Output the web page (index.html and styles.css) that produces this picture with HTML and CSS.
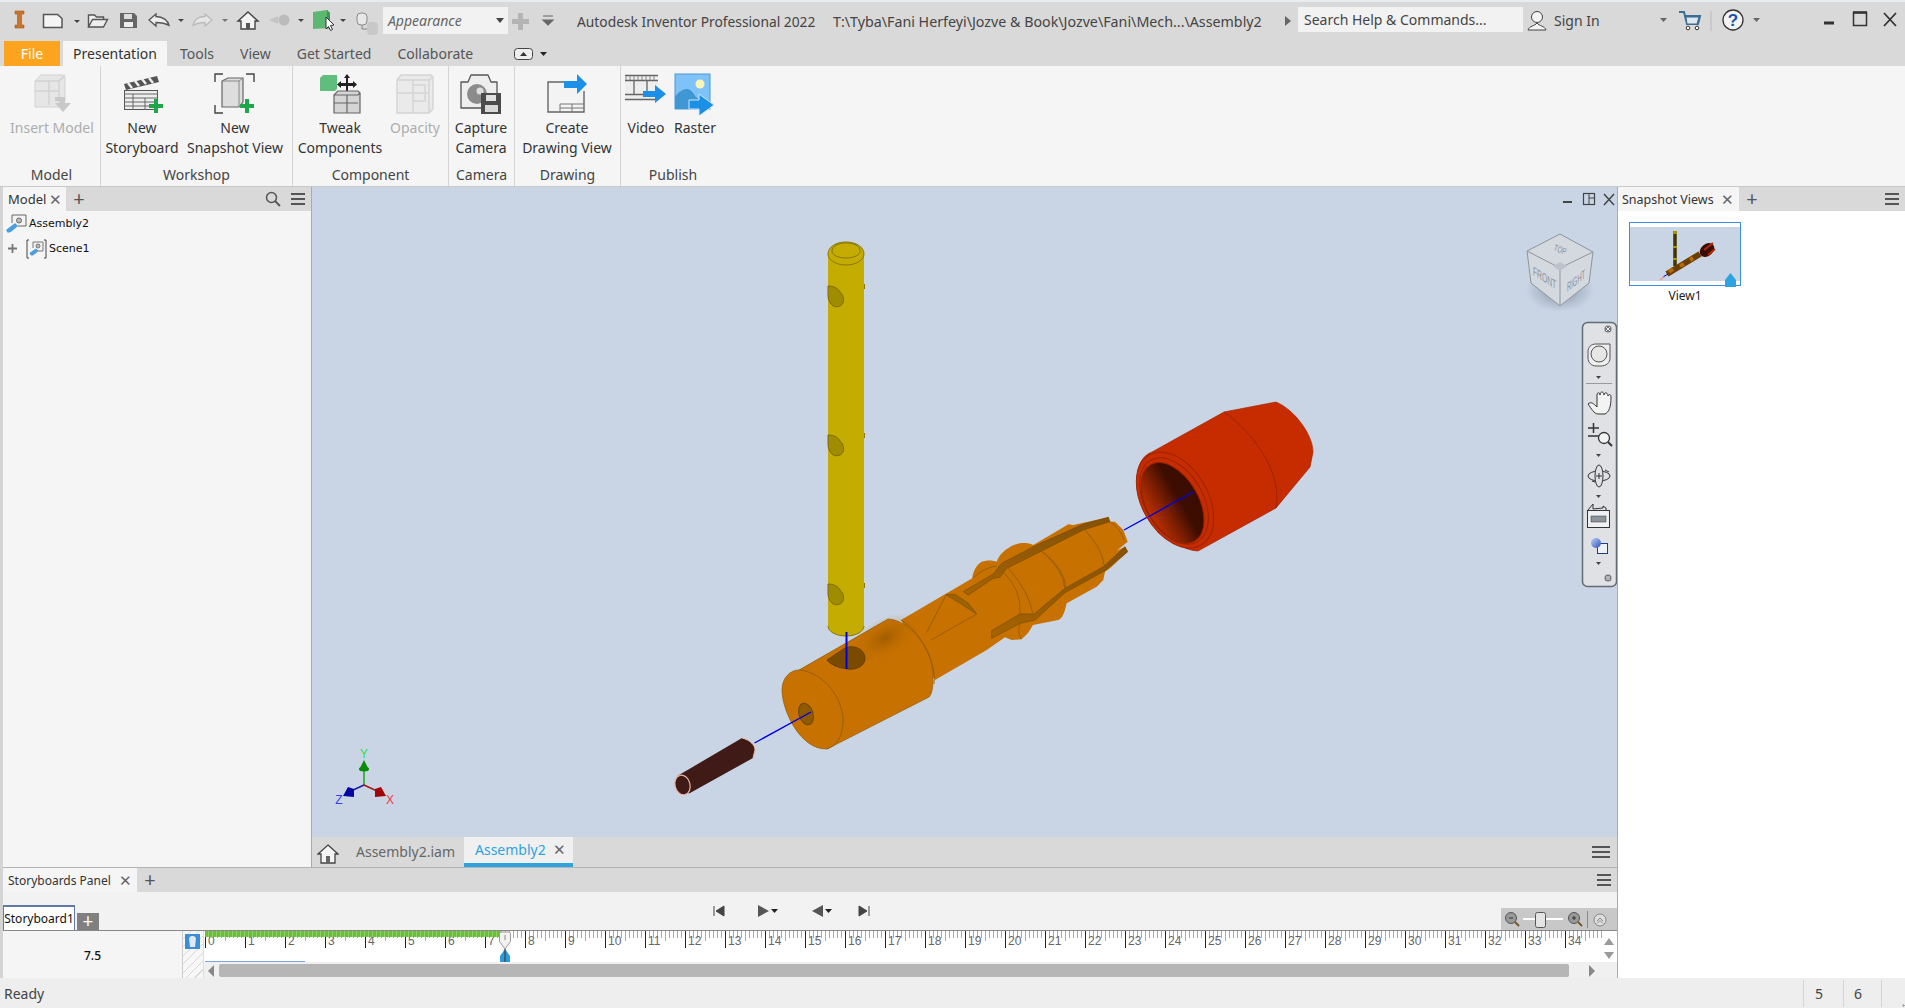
FILE: index.html
```html
<!DOCTYPE html>
<html lang="en">
<head>
<meta charset="utf-8">
<title>Autodesk Inventor Professional 2022</title>
<link rel="stylesheet" href="styles.css">
</head>
<body>
<div class="app">
  <div class="topstrip"></div>
  <header class="titlebar">
    <svg class="qat" viewBox="0 2 383 39" width="383" height="39">
      <path d="M15 11h9v3h-2.500v11h2.500v3h-9v-3h2.500v-11h-2.500z" fill="#c9762a" stroke="#a85a18" stroke-width=".6"/>
      <path d="M43.500 14.500h14l4.500 4v9h-18.500z" fill="#f4f4f4" stroke="#555" stroke-width="1.500"/>
      <path d="M74 20h6l-3 3z" fill="#444"/>
      <path d="M88.500 27v-12h6l2 2h7v3M88.500 27l4-7.500h15l-4 7.500z" fill="#eee" stroke="#555" stroke-width="1.400"/>
      <path d="M120 13h14l3 3v12h-17z" fill="#666"/>
      <rect x="124" y="14" width="8" height="5" fill="#ddd"/><rect x="124" y="22" width="9" height="5" fill="#eee"/>
      <path d="M156 14l-7 6 7 6v-3.500c5 0 9 .5 13 3-1-5-6-9-13-9z" fill="#eee" stroke="#555" stroke-width="1.300"/>
      <path d="M178 19h6l-3 3z" fill="#444"/>
      <path d="M205 14l7 6-7 6v-3.500c-5 0-8 .5-12 3 1-5 5-9 12-9z" fill="#e6e6e6" stroke="#bbb" stroke-width="1.300"/>
      <path d="M222 19h6l-3 3z" fill="#777"/>
      <path d="M248 12l10 9h-3v8h-14v-8h-3z" fill="#f3f3f3" stroke="#444" stroke-width="1.400"/><rect x="246" y="23" width="4" height="6" fill="#555"/>
      <circle cx="284" cy="20" r="5.500" fill="#bbb"/><path d="M269 20l9-4v8z" fill="#c4c4c4"/>
      <path d="M298 19h6l-3 3z" fill="#444"/>
      <path d="M313 12l14-2 3 3v15l-17 1z" fill="#5cb870"/><path d="M327 10l3 3v15l-3 1z" fill="#3c9854"/>
      <path d="M326 17l8 8-3.500.5 2 4-2 1-2-4-2.500 2.500z" fill="#fff" stroke="#333"/>
      <path d="M340 19h6l-3 3z" fill="#444"/>
      <rect x="357" y="13" width="10" height="12" rx="4" fill="#e8e8e8" stroke="#8a8a8a"/>
      <rect x="367" y="22" width="11" height="13" rx="4" fill="#c8c8c8"/>
      <path d="M362 25v4h5" fill="none" stroke="#888"/>
    </svg>
    <div class="appearance"><span>Appearance</span><i class="caret dark"></i></div>
    <svg class="qat2" viewBox="0 0 62 39" width="62" height="39">
      <path d="M10 11h5v6h6v5h-6v6h-5v-6h-6v-5h6z" fill="#b4b4b4"/>
      <path d="M35 14h10M35 18h10l-5 5z" fill="#666" stroke="#666" stroke-width="1.200"/>
    </svg>
    <div class="apptitle">Autodesk Inventor Professional 2022</div>
    <div class="filepath">T:\Tyba\Fani Herfeyi\Jozve &amp; Book\Jozve\Fani\Mech...\Assembly2</div>
    <i class="caret right"></i>
    <div class="search">Search Help &amp; Commands...</div>
    <svg class="winctl" viewBox="1523 2 382 39" width="382" height="39">
      <circle cx="1537" cy="17" r="5.500" fill="#f4f4f4" stroke="#444"/>
      <path d="M1537 23c-2 3-8 3-9 7h18c-1-4-7-4-9-7z" fill="#f4f4f4" stroke="#444"/>
      <text x="1554" y="26" class="signin">Sign In</text>
      <path d="M1660 18h7l-3.500 4z" fill="#666"/>
      <path d="M1679 12h5l3 12h11l2-8h-15" fill="none" stroke="#3a6d92" stroke-width="2"/>
      <path d="M1686 17h13l-2 7h-10z" fill="#dfe7ee" stroke="#3a6d92"/>
      <circle cx="1688" cy="28" r="1.800" fill="#fff" stroke="#333"/><circle cx="1697" cy="28" r="1.800" fill="#fff" stroke="#333"/>
      <path d="M1711 11v20" stroke="#bbb"/>
      <circle cx="1733" cy="20" r="10" fill="#f3f3f3" stroke="#333" stroke-width="1.300"/>
      <text x="1733" y="26" class="helpq">?</text>
      <path d="M1753 18h7l-3.500 4z" fill="#666"/>
      <rect x="1824" y="21.500" width="10" height="3" fill="#333"/>
      <rect x="1853.500" y="12.500" width="13" height="13" fill="none" stroke="#333" stroke-width="1.500"/><path d="M1853 12.500h14" stroke="#333" stroke-width="2.500"/>
      <path d="M1884 13l12 13M1896 13l-12 13" stroke="#333" stroke-width="1.800"/>
    </svg>
  </header>
  <nav class="tabs">
    <div class="tab file">File</div>
    <div class="tab active">Presentation</div>
    <div class="tab">Tools</div>
    <div class="tab">View</div>
    <div class="tab">Get Started</div>
    <div class="tab">Collaborate</div>
    <svg class="tabmin" viewBox="0 0 34 14" width="34" height="14"><rect x=".5" y="1.500" width="18" height="11" rx="3" fill="#eee" stroke="#444"/><path d="M6 9l3.500-4 3.500 4z" fill="#333"/><path d="M26 5h7l-3.500 4z" fill="#222"/></svg>
  </nav>
  <section class="ribbon">
    <div class="group g-model">
      <div class="btns">
        <div class="btn b-insert disabled">
          <svg viewBox="0 0 42 42" width="42" height="42"><path d="M4 8l6-6h22l2 2v24l-6 6H4z" fill="#e6e6e6" stroke="#d2d2d2"/><path d="M4 18h24M18 8v24M28 8v24M4 8h24l6-6" fill="none" stroke="#d2d2d2" stroke-width="1.500"/><path d="M24 24h10v6h6l-8 9-8-9h5v-2h-5z" fill="#c9c9c9"/></svg>
          <span>Insert Model</span>
        </div>
      </div>
      <div class="glabel">Model</div>
    </div>
    <div class="group g-workshop">
      <div class="btns">
        <div class="btn b-story">
          <svg viewBox="0 0 42 42" width="42" height="42"><path d="M3 11L36 3l2 6-33 8z" fill="#555"/><path d="M7 10l4 5M14 8l4 5M21 6l4 5M28 5l4 5" stroke="#eee" stroke-width="2.500"/><rect x="3.500" y="17.500" width="33" height="19" fill="#eee" stroke="#555"/><path d="M3 21h34M3 25h34M3 29h34M3 33h30M12 21v16M24 25v12" stroke="#666"/><path d="M28 31h5v-5h4v5h5v4h-5v5h-4v-5h-5z" fill="#1fa54a"/></svg>
          <span>New<br>Storyboard</span>
        </div>
        <div class="btn b-snap">
          <svg viewBox="0 0 42 42" width="42" height="42"><path d="M1 9V1h8M32 1h8v8M1 32v8h8" fill="none" stroke="#444" stroke-width="1.400"/><path d="M8 8l6-3h15v24l-4 5H8z" fill="#ddd" stroke="#666" stroke-width="1.200"/><path d="M8 8h17v26M25 8l4-3" fill="none" stroke="#888"/><path d="M26 31h5v-5h4v5h5v4h-5v5h-4v-5h-5z" fill="#1fa54a"/></svg>
          <span>New<br>Snapshot View</span>
        </div>
      </div>
      <div class="glabel">Workshop</div>
    </div>
    <div class="group g-component">
      <div class="btns">
        <div class="btn b-tweak">
          <svg viewBox="0 0 42 42" width="42" height="42"><path d="M1 5l3-3h14v14l-2 2H1z" fill="#5fbd7e"/><path d="M28 1l3 4h-2v5h5V8l4 3.500-4 3.500v-2h-5v5h2l-3 4-3-4h2v-5h-5v2l-4-3.500 4-3.500v2h5V5h-2z" fill="#222"/><path d="M15 22l4-4h20l2 2v20H15z" fill="#d5d5d5" stroke="#666" stroke-width="1.200"/><path d="M15 30h24M28 22v18M15 22h24l2-2" fill="none" stroke="#666" stroke-width="1.200"/></svg>
          <span>Tweak<br>Components</span>
        </div>
        <div class="btn b-opacity disabled">
          <svg viewBox="0 0 42 42" width="42" height="42"><path d="M3 7l4-5h30l2 2v32l-4 4H3z" fill="#eaeaea" stroke="#d4d4d4" stroke-width="1.400"/><path d="M3 20h32M19 7v33M35 7v33M3 7h32l4-4M19 12h12v16H19" fill="none" stroke="#d4d4d4" stroke-width="1.400"/></svg>
          <span>Opacity</span>
        </div>
      </div>
      <div class="glabel">Component</div>
    </div>
    <div class="group g-camera">
      <div class="btns">
        <div class="btn b-camera">
          <svg viewBox="0 0 42 42" width="42" height="42"><path d="M1 9h7l3-7h17l3 7h6v26H1z" fill="#eee" stroke="#555" stroke-width="1.300" stroke-linejoin="round"/><circle cx="17" cy="21" r="10" fill="#8b8b8b"/><circle cx="20" cy="18" r="3.500" fill="#ddd"/><path d="M21 20h20v21H21z" fill="#4b4b4b"/><rect x="26" y="22" width="10" height="6" fill="#e0e0e0"/><rect x="25" y="32" width="13" height="7" fill="#d8d8d8"/></svg>
          <span>Capture<br>Camera</span>
        </div>
      </div>
      <div class="glabel">Camera</div>
    </div>
    <div class="group g-drawing">
      <div class="btns">
        <div class="btn b-drawing">
          <svg viewBox="0 0 42 42" width="42" height="42"><path d="M22 9H2v30h36V18" fill="#f3f3f3" stroke="#666" stroke-width="1.400"/><path d="M14 31h24M14 31v8M26 31v8M14 35h24" fill="none" stroke="#777"/><path d="M18 8h13V1l10 10-10 10v-6H18z" fill="#1c8fe6"/></svg>
          <span>Create<br>Drawing View</span>
        </div>
      </div>
      <div class="glabel">Drawing</div>
    </div>
    <div class="group g-publish">
      <div class="btns">
        <div class="btn b-video">
          <svg viewBox="0 0 42 32" width="42" height="32"><path d="M0 2h33v24H0z" fill="#eee"/><path d="M0 2.500h33M0 7.500h33M0 21.500h33M0 26.500h33M9 8v13M22 8v13" stroke="#666" stroke-width="1.300"/><path d="M1 3v4M5 3v4M9 3v4M13 3v4M17 3v4M21 3v4M25 3v4M29 3v4" stroke="#888"/><path d="M18 18h12v-6l11 9-11 9v-6H18z" fill="#1c8fe6"/></svg>
          <span>Video</span>
        </div>
        <div class="btn b-raster">
          <svg viewBox="0 0 42 42" width="42" height="42"><rect x="1" y="1" width="35" height="35" fill="#7fc2f8" stroke="#4a9ad8"/><circle cx="26" cy="11" r="4.500" fill="#f9f5b8"/><path d="M1 36V24c3-5 8-8 12-8s6 4 9 8l6 4v8z" fill="#3f97d4"/><path d="M15 27h10v-6l15 11-15 11v-7H15z" fill="#1c8fe6" stroke="#cde6fa"/></svg>
          <span>Raster</span>
        </div>
      </div>
      <div class="glabel">Publish</div>
    </div>
  </section>
  <div class="workspace">
    <div class="leftcol">
      <div class="mainrow">
        <aside class="modelpanel">
          <div class="phead">
            <div class="ptab ptab-model">Model<span class="x">✕</span></div>
            <span class="plus">+</span>
            <span class="spacer"></span>
            <svg class="searchico" viewBox="0 0 16 16" width="16" height="16"><circle cx="6.500" cy="6.500" r="5" fill="none" stroke="#555" stroke-width="1.500"/><path d="M10 10l5 5" stroke="#555" stroke-width="1.800"/></svg>
            <span class="ham"><i></i><i></i><i></i></span>
          </div>
          <div class="tree">
            <div class="node n-root">
              <svg viewBox="0 0 21 20" width="21" height="20"><path d="M6 9V1h14v11h-8" fill="#f3f3f3" stroke="#666"/><circle cx="13" cy="6.500" r="2.500" fill="#bbb" stroke="#666"/><path d="M2 18l-1-2 8-6 2 2-6 5z" fill="#4a9fe0" stroke="#4a9fe0" stroke-linejoin="round" stroke-width="1.500"/></svg>
              <span>Assembly2</span>
            </div>
            <div class="node n-child">
              <svg class="expand" viewBox="0 0 9 9" width="9" height="9"><path d="M4.500 0v9M0 4.500h9" stroke="#777" stroke-width="1.800"/></svg>
              <svg class="sceneico" viewBox="0 0 21 20" width="21" height="20"><path d="M3 1H1v18h2M18 1h2v18h-2" fill="none" stroke="#444"/><path d="M7 9V3h10v9h-7" fill="#f3f3f3" stroke="#777"/><circle cx="12" cy="7" r="2" fill="#bbb" stroke="#777"/><path d="M5 16l-1-2 6-4 2 2-5 4z" fill="#4a9fe0" stroke="#4a9fe0" stroke-linejoin="round"/></svg>
              <span>Scene1</span>
            </div>
          </div>
        </aside>
        <div class="viewcol">
          <main class="viewport">
            <svg class="scene" viewBox="312 187 1305 650" width="1305" height="650">
              <defs>
                <linearGradient id="holeRed" x1="0" y1="1" x2="0" y2="0"><stop offset="0" stop-color="#bb3000"/><stop offset=".35" stop-color="#7a1e00"/><stop offset=".65" stop-color="#3d0d00"/><stop offset="1" stop-color="#3a0c00"/></linearGradient>
                <radialGradient id="shade" cx=".5" cy=".5" r=".5"><stop offset="0" stop-color="#7a4a00" stop-opacity=".5"/><stop offset="1" stop-color="#c67100" stop-opacity="0"/></radialGradient>
                <radialGradient id="cubeShadow" cx=".5" cy=".5" r=".5"><stop offset="0" stop-color="#6d7a8c" stop-opacity=".7"/><stop offset="1" stop-color="#6d7a8c" stop-opacity="0"/></radialGradient>
                <linearGradient id="ball" x1="0" y1="0" x2="1" y2="1"><stop offset="0" stop-color="#bcd0f4"/><stop offset="1" stop-color="#2b50c4"/></linearGradient>
                <linearGradient id="slot" x1="0" y1="0" x2="0" y2="1"><stop offset="0" stop-color="#84500a"/><stop offset="1" stop-color="#a66400"/></linearGradient>
              </defs>
              <g class="vpctl">
                <rect x="1563" y="201" width="9" height="2" fill="#444"/>
                <rect x="1583.500" y="193.500" width="11" height="11" fill="none" stroke="#444" stroke-width="1.200"/><path d="M1589 194v10M1589 198h5" stroke="#444"/>
                <path d="M1604 194l10 11M1614 194l-10 11" stroke="#444" stroke-width="1.500"/>
              </g>
              <!-- yellow pin -->
              <path d="M828 254c0-7 8-12 18-12s18 5 18 12v372c0 5-7 10-18 10s-18-5-18-10z" fill="#c4ac00"/>
              <path d="M828 254c0-7 8-12 18-12s18 5 18 12c0 6-8 11-18 11s-18-5-18-11zM832 251c0-5 6-8 14-8s14 3 14 8c0 4-6 7-14 7s-14-3-14-7z" fill="none" stroke="#8a7600" stroke-width="1"/>
              <path d="M828 626c0 5 7 10 18 10s18-5 18-10" fill="none" stroke="#8a7600"/>
              <path d="M828 286c5 0 10 2 12 6 4 4 4 8 3 11-2 4-8 5-11 2-3-3-4-6-4-10z" fill="#a08c00" stroke="#7d6a00"/>
              <path d="M828 435c5 0 10 2 12 6 4 4 4 8 3 11-2 4-8 5-11 2-3-3-4-6-4-10z" fill="#a08c00" stroke="#7d6a00"/>
              <path d="M828 584c5 0 10 2 12 6 4 4 4 8 3 11-2 4-8 5-11 2-3-3-4-6-4-10z" fill="#a08c00" stroke="#7d6a00"/>
              <path d="M864.500 284v5M864.500 433v5M864.500 583v5" stroke="#8a7600"/>
              <!-- orange body: shaft + collet -->
              <path d="M901 620L972.300 578.300C972.500 572 978 561 985 561C990 560 994 561 996.700 561.700C999 556 1003 551 1008.300 548.300C1014 544 1024 541 1033.300 545L1061.700 528.300L1068.300 524.300L1073.300 525L1108.300 517.300L1110 521.700L1115 521.700L1123.300 530L1127.700 541.700L1116.700 550.700L1125 546.700L1127.700 551.700L1110 568.300L1105 571.700L1103.300 580L1096.700 586.700L1066.700 603.300L1065 610C1063 616 1061 619 1058.300 620L1033 625L1028 633L1021.700 639.300L1011.700 640L1005 637.300L986.700 650L935 680z" fill="#c67100"/>
              <path d="M963.300 591.700L993.300 574L1001.700 563.300L1036.700 545L1083.300 524L1108.300 517.300L1110 521.700L1083.300 530L1040 551.700L1006.700 568.300L1000 577.300L993.300 578.300L968.300 595z" fill="url(#slot)" stroke="#7b4c00" stroke-width=".7"/>
              <path d="M991.700 630.700L1020 614L1034 614L1065 588.300L1103.300 566.700L1125 546.700L1127.700 551.700L1105 570.700L1065 592.700L1035 620L1020 623.300L991.700 638.300z" fill="url(#slot)" stroke="#7b4c00" stroke-width=".7"/>
              <path d="M946 594.700L955 594.300L968.300 603.300L976.700 614L960 603.300z" fill="#9c6100" stroke="#7b4c00" stroke-width=".6"/>
              <path d="M931 640L976.700 614M927 632L946 595" fill="none" stroke="#8f5a00" stroke-width=".8"/>
              <path d="M1008.300 568.300Q1028 590 1032.700 613M1003 571.700Q1022 590 1020 614M1038 548Q1065 570 1065 590M1043 552Q1066 570 1066 590M1085 530Q1103 550 1104 565M1020 623Q1017 632 1021 639M973 578Q985 567 997 566M1110 521.700Q1120 528 1124 540" fill="none" stroke="#8f5a00" stroke-width=".8"/>
              <!-- big cylinder -->
              <path d="M799 670L888 619C910 620 935 650 933 680C933 690 931 695 929 697L827 749C800 750 782 710 782 690C782 678 790 670 799 670z" fill="#c67100" stroke="#8f5a00" stroke-width=".7"/>
              <ellipse cx="885" cy="638" rx="38" ry="20" transform="rotate(-29 885 638)" fill="url(#shade)"/>
              <path d="M799 670C825 672 843 700 843 720C843 735 838 745 827 749M901 620C918 630 937 660 934 684" fill="none" stroke="#8f5a00" stroke-width=".8"/>
              <path d="M827 660L845 648C855 644 865 650 865 658C865 667 855 670 848 669C840 668 832 666 827 660z" fill="#7a4a00" stroke="#6a4000"/>
              <ellipse cx="806" cy="714" rx="7" ry="11" transform="rotate(-18 806 714)" fill="#8f5a00" stroke="#6f4600"/>
              <!-- explode trails -->
              <path d="M846.500 632V669" stroke="#0000e0" stroke-width="2" fill="none"/>
              <path d="M754.500 743L811 712M1124 530L1193 492" stroke="#0000e0" stroke-width="1.400" fill="none"/>
              <!-- red cap -->
              <path d="M1152 452L1224 412L1276 402C1295 410 1313 435 1313 452L1310 467L1276 508L1198 551C1170 550 1137 510 1137 480C1137 465 1143 455 1152 452z" fill="#c72c00" stroke="#a52500" stroke-width=".7"/>
              <path d="M1224 412C1250 430 1283 470 1276 508" fill="none" stroke="#9a2500"/>
              <ellipse cx="1175" cy="500" rx="52" ry="33" transform="rotate(60 1175 500)" fill="#c72c00" stroke="#9a2500"/>
              <ellipse cx="1174" cy="501" rx="47" ry="29" transform="rotate(60 1174 501)" fill="none" stroke="#9a2500"/>
              <ellipse cx="1172.500" cy="503" rx="44" ry="26" transform="rotate(60 1172.500 503)" fill="url(#holeRed)" stroke="#8e2000"/>
              <path d="M1148 517L1193 492" stroke="#0000e0" stroke-width="1.400"/>
              <!-- dark pin -->
              <path d="M679 775L742 738C750 740 755 745 755 750L753 758L690 793C683 796 675 790 675 783C675 779 677 776 679 775z" fill="#3f1a17"/>
              <ellipse cx="682.500" cy="785" rx="7.500" ry="10" transform="rotate(-15 682.500 785)" fill="#3f1a17" stroke="#edb6a4" stroke-width="1.200"/>
              <path d="M742 738C750 740 755 745 755 750L753 758" fill="none" stroke="#edb6a4"/>
              <!-- triad -->
              <g class="triad">
                <path d="M364 785V770" stroke="#0ea10e" stroke-width="1.400"/>
                <path d="M364 760l5 10h-10z" fill="#0a8a0a"/><ellipse cx="364" cy="769" rx="5" ry="2.500" fill="#0a8a0a"/>
                <path d="M364 785l-13 6" stroke="#1a1aa8" stroke-width="1.400"/>
                <path d="M343 796l5-9 6 2v8z" fill="#0505a0"/>
                <path d="M364 785l13 6" stroke="#a01a1a" stroke-width="1.400"/>
                <path d="M375 797v-8l6-2 5 9z" fill="#a00606"/>
                <text x="364" y="758" class="ax ax-y">Y</text>
                <text x="339" y="804" class="ax ax-z">Z</text>
                <text x="390" y="804" class="ax ax-x">X</text>
              </g>
              <!-- view cube -->
              <ellipse cx="1560" cy="290" rx="34" ry="22" fill="url(#cubeShadow)"/>
              <path d="M1560 234l33 18-4 31-29 23-29-23-4-32z" fill="#d4d9e0"/>
              <path d="M1560 234l33 18-33 16-33-17zM1560 268v38M1527 251l4 32 29 23 29-23 4-31" fill="none" stroke="#8f9499" stroke-width="1"/>
              <path d="M1560 262l7 4-7 5-7-5z" fill="#bcc3cc"/>
              <text class="cube" transform="translate(1553 250) rotate(22) scale(.7 1)">TOP</text>
              <text class="cube" transform="translate(1533 275) skewY(32) scale(.75 1.400)">FRONT</text>
              <text class="cube" transform="translate(1567 292) skewY(-38) scale(.65 1.400)">RIGHT</text>
              <!-- nav bar -->
              <rect x="1582.500" y="322.500" width="34" height="264" rx="5" fill="#dfe1e5" stroke="#636b75" stroke-width="1.500"/>
              <circle cx="1608" cy="329" r="3.500" fill="#777"/><path d="M1606 327l4 4M1610 327l-4 4" stroke="#eee"/>
              <path d="M1588 352c0-5 3-8 8-8h14v14c0 5-4 8-9 8h-5c-5 0-8-4-8-8z" fill="#eee" stroke="#555"/>
              <circle cx="1599" cy="354" r="8" fill="#e6e6e6" stroke="#555"/>
              <path d="M1596 376h5l-2.500 3z" fill="#444"/>
              <path d="M1586 383.500h26" stroke="#999"/>
              <path d="M1588 404c3-3 6 0 9 3v-12c0-3 3-3 3 0 0-4 4-4 4 0 0-3 4-3 4 1 1-2 3-2 3 1 0 10-2 15-6 17h-7c-4 0-7-6-10-10z" fill="#f3f3f3" stroke="#333"/>
              <path d="M1588 428h11M1593.500 423v10M1588 436h11" stroke="#333" stroke-width="1.500"/>
              <circle cx="1604" cy="438" r="5.500" fill="#f3f3f3" stroke="#333" stroke-width="1.300"/><path d="M1608 442l4 4" stroke="#333" stroke-width="2"/>
              <path d="M1596 454h5l-2.500 3z" fill="#444"/>
              <ellipse cx="1599" cy="476" rx="11" ry="5" fill="none" stroke="#333"/><ellipse cx="1599" cy="476" rx="4" ry="11" fill="#dfe1e5" stroke="#333"/>
              <path d="M1596 476h6M1599 473v6M1605 470l4 2M1592 481l3 1" stroke="#333"/>
              <path d="M1596 495h5l-2.500 3z" fill="#444"/>
              <rect x="1587.500" y="510.500" width="22" height="17" fill="#eef0f3" stroke="#333"/><rect x="1591" y="516" width="15" height="6" fill="#8e949c" stroke="#333" stroke-width=".5"/>
              <path d="M1588 510l5-6v5l10-1v-2l3 2v2" fill="none" stroke="#333"/>
              <rect x="1597.500" y="543.500" width="10" height="10" fill="#eef0f3" stroke="#1d3f8a"/>
              <circle cx="1596" cy="543" r="5" fill="url(#ball)"/>
              <path d="M1596 562h5l-2.500 3z" fill="#444"/>
              <circle cx="1608" cy="578" r="3.500" fill="#777"/><path d="M1606 577h4M1606 579h4" stroke="#eee"/>
            </svg>
          </main>
          <div class="doctabs">
            <svg class="homeico" viewBox="0 0 22 20" width="22" height="20"><path d="M11 1l10 9h-3v9H4v-9H1z" fill="#f5f5f5" stroke="#444" stroke-width="1.300"/><rect x="9" y="12" width="4" height="7" fill="#666"/></svg>
            <div class="doctab">Assembly2.iam</div>
            <div class="doctab current">Assembly2<span class="x">✕</span></div>
            <span class="spacer"></span>
            <span class="ham big"><i></i><i></i><i></i></span>
          </div>
        </div>
      </div>
      <section class="storyboard">
        <div class="phead">
          <div class="ptab ptab-story">Storyboards Panel<span class="x">✕</span></div>
          <span class="plus">+</span>
          <span class="spacer"></span>
          <span class="ham sb"><i></i><i></i><i></i></span>
        </div>
        <div class="sb-tools">
          <div class="sb-tab">Storyboard1</div>
          <div class="sb-add">+</div>
          <svg class="transport" viewBox="0 0 170 16" width="170" height="16">
            <path d="M3 3v10M13 3L5 8l8 5z" fill="#444" stroke="#444"/>
            <path d="M47 2l11 6-11 6z" fill="#555"/><path d="M60 6h7l-3.500 4z" fill="#222"/>
            <path d="M112 2l-11 6 11 6z" fill="#555"/><path d="M114 6h7l-3.500 4z" fill="#222"/>
            <path d="M148 3l8 5-8 5zM158 3v10" fill="#444" stroke="#444"/>
          </svg>
          <span class="spacer"></span>
          <div class="sb-zoom">
            <svg viewBox="0 0 116 22" width="116" height="22">
              <circle cx="10" cy="10" r="5.500" fill="#999" stroke="#555"/><path d="M8 10h4" stroke="#333"/><path d="M14 14l4 4" stroke="#7a5526" stroke-width="2"/>
              <path d="M22 11h40" stroke="#fff" stroke-width="2"/><rect x="34.500" y="4.500" width="10" height="15" rx="2" fill="#e4e4e4" stroke="#555"/>
              <circle cx="73" cy="10" r="5.500" fill="#999" stroke="#555"/><path d="M71 10h4M73 8v4" stroke="#333"/><path d="M77 14l4 4" stroke="#7a5526" stroke-width="2"/>
              <path d="M86.500 3v17" stroke="#888"/>
              <circle cx="99" cy="12" r="6" fill="#ddd" stroke="#888"/><path d="M96 13l3-3 3 3M96 15.500l3-3 3 3" fill="none" stroke="#888"/>
            </svg>
          </div>
        </div>
        <div class="timeline">
          <div class="t-value">7.5</div>
          <div class="t-icon">
            <svg viewBox="0 0 15 15" width="15" height="15"><rect width="15" height="15" fill="#3c8fd6"/><path d="M4 4l2-2h3l2 2-1 9H5z" fill="#dfe9f2"/></svg>
          </div>
          <div class="t-main">
            <div class="ruler">
              <div class="progress"></div>
              <div class="ticks">
                <span>0</span><span>1</span><span>2</span><span>3</span><span>4</span><span>5</span><span>6</span><span>7</span><span>8</span><span>9</span>
                <span>10</span><span>11</span><span>12</span><span>13</span><span>14</span><span>15</span><span>16</span><span>17</span><span>18</span><span>19</span>
                <span>20</span><span>21</span><span>22</span><span>23</span><span>24</span><span>25</span><span>26</span><span>27</span><span>28</span><span>29</span>
                <span>30</span><span>31</span><span>32</span><span>33</span><span>34</span>
              </div>
              <svg class="playhead" viewBox="0 0 14 32" width="14" height="32">
                <path d="M1.500 2.500a1.500 1.500 0 0 1 1.500-1.500h8a1.500 1.500 0 0 1 1.500 1.500v8L7 18l-5.500-7.500z" fill="#f2f2f2" stroke="#999"/>
                <path d="M7 4v5" stroke="#888"/><path d="M7 18l5 7v6H2v-6z" fill="#2e9ad6"/><path d="M7 18v13" stroke="#333"/>
              </svg>
              <div class="selline"></div>
            </div>
            <div class="ruler-side"><i class="up"></i><i class="down"></i></div>
            <div class="hscroll"><i class="caret left"></i><div class="thumb"></div><i class="caret rightg"></i></div>
          </div>
        </div>
      </section>
    </div>
    <aside class="snappanel">
      <div class="phead">
        <div class="ptab ptab-snap">Snapshot Views<span class="x">✕</span></div>
        <span class="plus">+</span>
        <span class="spacer"></span>
        <span class="ham"><i></i><i></i><i></i></span>
      </div>
      <div class="snapbody">
        <div class="thumbcard">
          <svg viewBox="1630 223 110 62" width="110" height="62">
            <rect x="1630" y="223" width="110" height="62" fill="#c9d5e5"/>
            <rect x="1630" y="223" width="110" height="4" fill="#fff"/>
            <rect x="1630" y="281" width="110" height="4" fill="#fff"/>
            <path d="M1675 231V266" stroke="#3e3500" stroke-width="3.500"/>
            <path d="M1675 231v3M1675 246v2M1675 258v2" stroke="#b09a00" stroke-width="3.500"/>
            <path d="M1667 274L1700 254" stroke="#6b3d00" stroke-width="6"/><path d="M1669 272l4-3M1680 266l4-2M1690 260l3-2" stroke="#b76a00" stroke-width="4"/>
            <path d="M1663 277l5-3M1700 253l6-3" stroke="#0000d8" stroke-width="1"/>
            <path d="M1660 280l4-3" stroke="#e8a8a0" stroke-width="2"/>
            <ellipse cx="1707" cy="250" rx="6" ry="8" transform="rotate(50 1707 250)" fill="#3a0d00"/>
            <path d="M1704 250l9-7M1708 255l7-6" stroke="#b12a00" stroke-width="2"/>
            <path d="M1725 280l5.500-7 5.500 7v7h-11z" fill="#2ea3df"/>
          </svg>
        </div>
        <div class="thumblabel">View1</div>
      </div>
    </aside>
  </div>
  <footer class="status">
    <span class="ready">Ready</span>
    <span class="spacer"></span>
    <span class="cell c5">5</span>
    <span class="cell c6">6</span>
    <span class="cell grip"></span>
  </footer>
</div>
</body>
</html>
```

FILE: styles.css
```css
* { box-sizing: border-box; }
html, body { margin: 0; height: 100%; overflow: hidden; }
body { font-family: "Noto Sans", "Open Sans", sans-serif; font-size: 13px; color: #333; background: #d0d0d0; }
.app { width: 1905px; height: 1008px; display: flex; flex-direction: column; background: #d9d9d9; overflow: hidden; }
.spacer { flex: 1; }

.topstrip { height: 2px; background: #e9ecee; }
.titlebar { height: 39px; display: flex; align-items: flex-start; background: #d9d9d9; }
.qat, .qat2, .winctl { display: block; flex: none; }
.appearance { width: 125px; height: 27px; margin-top: 5px; background: #f2f2f2; display: flex; align-items: center; padding-left: 5px; font-size: 14px; font-style: italic; color: #666; flex: none; }
.appearance .caret.dark { margin-left: auto; margin-right: 4px; }
.caret { display: inline-block; width: 0; height: 0; }
.caret.dark { border-left: 4px solid transparent; border-right: 4px solid transparent; border-top: 5px solid #444; }
.caret.right { border-top: 5px solid transparent; border-bottom: 5px solid transparent; border-left: 6px solid #666; margin: 14px 7px 0 16px; flex: none; }
.apptitle { margin-left: 7px; width: 256px; line-height: 39px; font-size: 13.800px; color: #444; white-space: nowrap; flex: none; }
.filepath { width: 436px; line-height: 39px; font-size: 14.250px; color: #444; white-space: nowrap; flex: none; }
.search { width: 225px; height: 25px; margin-top: 5px; background: #f2f2f2; padding-left: 6px; line-height: 25px; font-size: 14px; color: #444; white-space: nowrap; flex: none; }
.signin { font-family: "Noto Sans", sans-serif; font-size: 14px; fill: #444; }
.helpq { font-family: "Liberation Sans", sans-serif; font-size: 17px; font-weight: bold; fill: #1d4fb0; text-anchor: middle; }

.tabs { height: 25px; display: flex; padding-left: 4px; background: #d9d9d9; align-items: stretch; }
.tab { font-size: 14px; line-height: 25px; padding: 0 13px; color: #555; white-space: nowrap; }
.tab.file { width: 56px; padding: 0; text-align: center; background: #fca31f; color: #fff; margin-right: 3px; }
.tab.active { width: 104px; padding: 0; text-align: center; background: #f5f5f5; color: #333; }
.tabmin { align-self: center; margin-left: 28px; flex: none; }

.ribbon { height: 121px; display: flex; background: #f5f5f5; border-bottom: 1px solid #c8c8c8; }
.group { display: flex; flex-direction: column; border-right: 1px solid #d4d4d4; height: 120px; flex: none; }
.g-model { width: 101px; }
.g-workshop { width: 192px; }
.g-component { width: 156px; }
.g-camera { width: 66px; }
.g-drawing { width: 106px; }
.g-publish { width: 104px; border-right: none; }
.btns { display: flex; flex: 1; min-height: 0; }
.btn { display: flex; flex-direction: column; align-items: center; padding-top: 7px; font-size: 14px; line-height: 20px; color: #333; text-align: center; white-space: nowrap; flex: none; }
.btn svg { display: block; height: 42px; margin-bottom: 3px; flex: none; }
.btn.disabled { color: #adadad; }
.b-insert { width: 90px; margin-left: 7px; }
.b-story { width: 82px; }
.b-snap { width: 104px; }
.b-tweak { width: 94px; }
.b-opacity { width: 56px; }
.b-camera { width: 64px; }
.b-drawing { width: 104px; }
.b-video { width: 50px; }
.b-video svg { height: 32px; margin-bottom: 13px; }
.b-raster { width: 48px; }
.glabel { text-align: center; font-size: 14px; line-height: 20px; color: #444; flex: none; margin-bottom: 1px; }
.g-model .glabel { padding-left: 3px; }

.workspace { flex: 1; min-height: 0; display: flex; }
.leftcol { width: 1617px; display: flex; flex-direction: column; padding-left: 3px; background: #d4d4d4; flex: none; }
.mainrow { height: 681px; display: flex; border-bottom: 1px solid #b4b4b4; flex: none; }
.phead { height: 24px; display: flex; align-items: center; background: #d9d9d9; flex: none; }
.ptab { height: 24px; display: flex; align-items: center; background: #f5f5f5; font-size: 13px; color: #333; white-space: nowrap; position: relative; }
.ptab .x, .doctab .x { color: #666; font-size: 15px; position: absolute; }
.ptab-model { width: 63px; padding-left: 5px; }
.ptab-model .x { left: 46px; }
.ptab-story { width: 134px; padding-left: 5px; font-size: 12px; }
.ptab-story .x { left: 116px; }
.ptab-snap { width: 121px; padding-left: 4px; font-size: 12.500px; }
.ptab-snap .x { left: 103px; }
.plus { width: 26px; text-align: center; font-size: 20px; line-height: 24px; color: #555; }
.searchico { margin-right: 10px; flex: none; }
.ham { display: flex; flex-direction: column; gap: 3px; width: 14px; margin-right: 6px; flex: none; }
.ham i { display: block; height: 2px; background: #555; }
.ham.big { width: 18px; margin-right: 7px; }

.modelpanel { width: 309px; flex: none; display: flex; flex-direction: column; background: #f5f5f5; border-right: 1px solid #ababab; }
.tree { flex: 1; background: #f5f5f5; font-family: "DejaVu Sans", sans-serif; font-size: 11px; color: #111; }
.node { display: flex; align-items: center; height: 25px; }
.n-root { padding-left: 3px; }
.n-root span { margin-left: 2px; }
.n-child { padding-left: 5px; }
.n-child .expand { margin-right: 9px; }
.n-child span { margin-left: 2px; }
.viewcol { flex: 1; min-width: 0; display: flex; flex-direction: column; }
.viewport { height: 650px; background: #c9d5e5; flex: none; overflow: hidden; }
.scene { display: block; }
.ax { font-family: "Liberation Sans", sans-serif; font-size: 12px; text-anchor: middle; }
.ax-y { fill: #32dc4a; }
.ax-z { fill: #3a3aee; }
.ax-x { fill: #ee3a4a; }
.cube { font-family: "Liberation Sans", sans-serif; font-size: 9px; fill: #8b9097; }
.doctabs { flex: 1; display: flex; align-items: stretch; background: #d9d9d9; }
.homeico { margin: 7px 17px 0 5px; flex: none; }
.doctab { font-size: 14px; line-height: 30px; color: #666; width: 108px; white-space: nowrap; flex: none; position: relative; }
.doctab.current { width: 109px; padding-left: 11px; background: #f0f0f0; color: #2ea3df; border-bottom: 4px solid #2ea3df; line-height: 25px; }
.doctab.current .x { left: 89px; top: 0; }
.doctabs .ham.big { align-self: center; }

.storyboard { flex: 1; min-height: 0; display: flex; flex-direction: column; background: #f2f2f2; }
.sb-tools { height: 39px; display: flex; align-items: flex-end; flex: none; border-bottom: 1px solid #888; }
.sb-tab { width: 72px; height: 25px; background: #fff; border: 1px solid #5f7aa8; border-top-width: 2px; border-bottom: none; font-size: 12px; line-height: 23px; color: #111; text-align: center; white-space: nowrap; }
.sb-add { width: 22px; height: 17px; margin-left: 2px; background: #808080; color: #fff; font-size: 19px; line-height: 17px; text-align: center; }
.transport { align-self: flex-start; margin: 11px 0 0 612px; flex: none; }
.sb-zoom { width: 116px; height: 22px; background: #c8c8c8; flex: none; }
.sb-zoom svg { display: block; }
.timeline { flex: 1; min-height: 0; display: flex; }
.t-value { width: 180px; text-align: center; font-size: 12px; line-height: 50px; color: #111; background: #f5f5f5; border-right: 1px solid #ccc; flex: none; font-weight: 500; }
.t-icon { width: 21px; background: repeating-linear-gradient(135deg, #f7f7f7 0 5px, #d8d8d8 5px 6px); padding: 3px 0 0 2px; border-right: 1px solid #ddd; flex: none; }
.t-icon svg { display: block; }
.t-main { flex: 1; min-width: 0; display: grid; grid-template-columns: 1fr 15px; grid-template-rows: 31px 1fr; background: #f0f0f0; }
.ruler { position: relative; background: #fff; overflow: hidden; }
.ticks { display: flex; padding-left: 1px; height: 17px; background: repeating-linear-gradient(90deg, #aaa 0 1px, transparent 1px 4px) 1px 0 / 100% 7px no-repeat; }
.ticks span { flex: none; width: 40px; height: 17px; border-left: 1px solid #222; padding-left: 2px; padding-top: 4px; font-family: "Liberation Sans", sans-serif; font-size: 12px; line-height: 13px; color: #666; background: linear-gradient(#aaa, #aaa) 19px 0 / 1px 10px no-repeat; }
.progress { position: absolute; left: 1px; top: 0; width: 296px; height: 6px; z-index: 1; background: repeating-linear-gradient(90deg, #68c135 0 3px, #8ed067 3px 4px); }
.playhead { position: absolute; left: 294px; top: 0; z-index: 2; }
.selline { position: absolute; left: 1px; bottom: 0; width: 100px; height: 1px; background: #7aa7dc; }
.ruler-side { background: #fff; position: relative; }
.ruler-side i { position: absolute; left: 2px; width: 0; height: 0; border-left: 5.500px solid transparent; border-right: 5.500px solid transparent; }
.ruler-side .up { top: 7px; border-bottom: 7px solid #9a9a9a; }
.ruler-side .down { top: 21px; border-top: 7px solid #9a9a9a; }
.hscroll { grid-column: 1 / 3; display: flex; align-items: center; padding: 2px 0 1px; }
.caret.left { border-top: 6px solid transparent; border-bottom: 6px solid transparent; border-right: 6px solid #888; margin-left: 4px; flex: none; }
.thumb { margin-left: 5px; width: 1350px; height: 13px; background: #b6b6b6; border-radius: 2px; flex: none; }
.caret.rightg { border-top: 6px solid transparent; border-bottom: 6px solid transparent; border-left: 6px solid #888; margin-left: 20px; flex: none; }

.snappanel { width: 288px; flex: none; border-left: 1px solid #ababab; background: #fff; display: flex; flex-direction: column; }
.snapbody { flex: 1; padding: 11px 0 0 11px; }
.thumbcard { width: 112px; height: 64px; border: 1px solid #3a8eea; }
.thumbcard svg { display: block; overflow: visible; }
.thumblabel { width: 112px; text-align: center; font-size: 12px; line-height: 20px; color: #222; }

.status { height: 30px; display: flex; align-items: center; background: #eeeeee; flex: none; font-size: 14px; color: #444; }
.ready { margin-left: 4px; }
.cell { height: 27px; border-left: 1px solid #d4d4d4; line-height: 27px; flex: none; }
.c5 { width: 40px; padding-left: 11px; }
.c6 { width: 38px; padding-left: 10px; }
.grip { width: 24px; background: radial-gradient(circle, #aaa 1px, transparent 1.300px) right bottom / 3px 3px no-repeat; }
```
